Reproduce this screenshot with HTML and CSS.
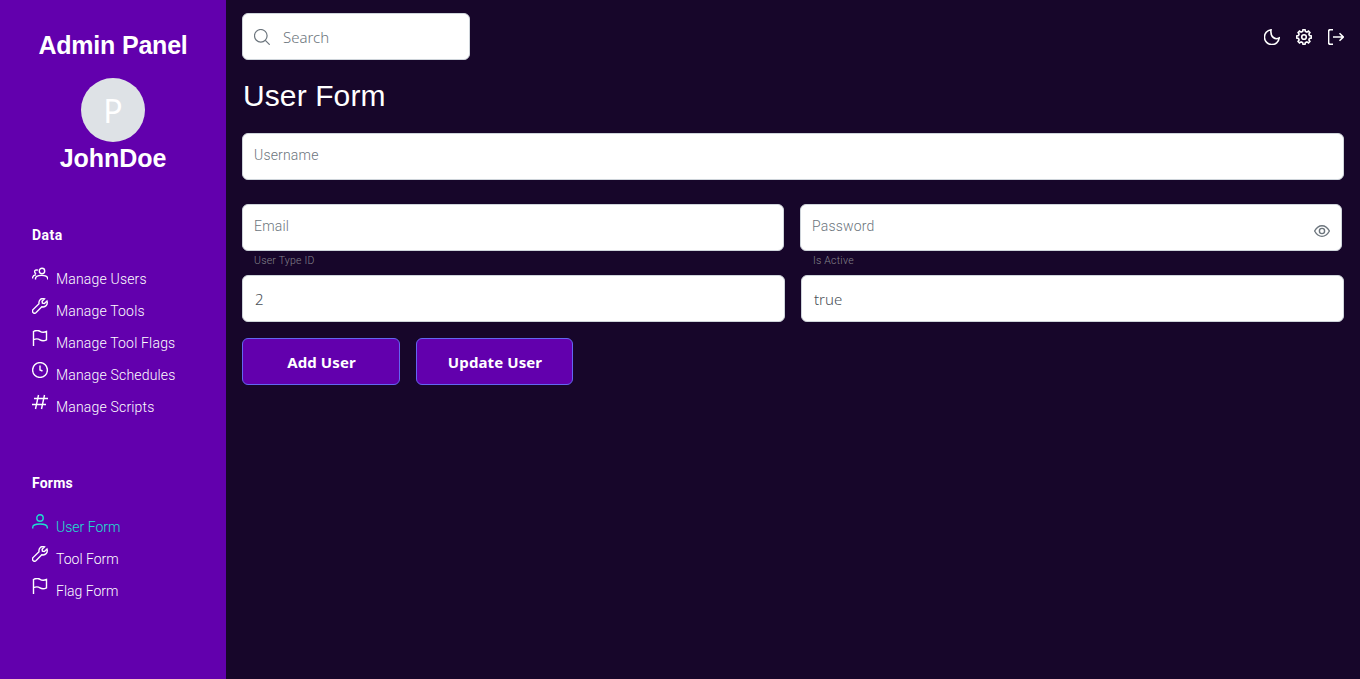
FILE: index.html
```html
<!DOCTYPE html>
<html lang="en">
<head>
<meta charset="utf-8">
<title>Admin Panel</title>
<link rel="stylesheet" href="styles.css">
</head>
<body>
<svg class="sprite" aria-hidden="true">
  <symbol id="users" viewBox="0 0 16 16"><circle cx="10" cy="5" r="2.700"/><path d="M3.500 13.500v-.7c0-2.400 2-3.400 6-3.400s6.200 1.400 6.200 3.400v.7M6 4.200c-2-.700-3.400.1-3.400 1.500 0 1 .6 1.700 1.600 2M.5 12.500c0-2 1-3.300 3.500-3.700"/></symbol>
  <symbol id="wrench" viewBox="0 0 16 16"><path d="M15 3.100 12.400 5.400l-2-.300-.300-1.900L12.500.8C9.300-.2 6.400 2 7 5.800L1 11.600c-.8 1-.6 2.100 0 2.900.9.9 2 1 2.900.3l5.900-6c3.900.8 6.300-2.200 5.200-5.700Z"/></symbol>
  <symbol id="flag" viewBox="0 0 16 16"><path d="M1.500 16V1.500C4.500-.1 6 0 8 1.300s4 1.300 6.500.2v8.300c-2.500 1.300-4.500 1.300-6.500 0s-3.500-1.400-6.500-.2"/></symbol>
  <symbol id="clock" viewBox="0 0 16 16"><circle cx="8" cy="8" r="7.400"/><path d="M8 3.500V8l2.500 1"/></symbol>
  <symbol id="hash" viewBox="0 0 16 16"><path d="M6.500 1 3.500 15M12.500 1 9.500 15M2 4.500h14M0 10.500h14"/></symbol>
  <symbol id="user" viewBox="0 0 16 16"><circle cx="8" cy="4" r="3.200"/><path d="M.7 14.500v-1C.7 11.200 3.500 10 8 10s7.300 1.200 7.300 3.500v1"/></symbol>
  <symbol id="search" viewBox="0 0 16 16"><circle cx="6.800" cy="6.800" r="6.300"/><path d="m11.300 11.300 4.400 4.400"/></symbol>
  <symbol id="moon" viewBox="0 0 16 16"><path d="M7 .8A7.400 7.400 0 1 0 15.200 9C11.400 11 6 8.400 7 .8Z"/></symbol>
  <symbol id="cog" viewBox="0 0 16 16"><path d="M6.600 2.500 7 .7h2l.4 1.800 1.500.6 1.600-1 1.400 1.400-1 1.600.6 1.500 1.800.4v2l-1.800.4-.6 1.500 1 1.600-1.400 1.400-1.600-1-1.500.6-.4 1.800H7l-.4-1.800-1.500-.6-1.600 1-1.400-1.400 1-1.600-.6-1.500L.7 9V7l1.800-.4.6-1.500-1-1.600 1.400-1.400 1.600 1Z"/><circle cx="8" cy="8" r="2.300"/></symbol>
  <symbol id="exit" viewBox="0 0 16 16"><path d="M5 .6H2.500C1 .6.6 1.100.6 2.500v11c0 1.400.4 1.900 1.900 1.900H5M5 8h10.300M11.500 4.300 15.300 8l-3.800 3.700"/></symbol>
  <symbol id="eye" viewBox="0 0 16 16"><path d="M.6 8C4.500.9 11.500.9 15.400 8C11.500 15.100 4.500 15.100.6 8Z"/><circle cx="8" cy="8" r="2.600"/></symbol>
</svg>
<div class="app">
  <aside class="sidebar">
    <h2 class="brand">Admin Panel</h2>
    <div class="avatar">P</div>
    <h2 class="name">JohnDoe</h2>
    <nav class="group">
      <h3 class="group-title">Data</h3>
      <a class="link"><svg class="icon"><use href="#users"/></svg><span>Manage Users</span></a>
      <a class="link"><svg class="icon"><use href="#wrench"/></svg><span>Manage Tools</span></a>
      <a class="link"><svg class="icon"><use href="#flag"/></svg><span>Manage Tool Flags</span></a>
      <a class="link"><svg class="icon"><use href="#clock"/></svg><span>Manage Schedules</span></a>
      <a class="link"><svg class="icon"><use href="#hash"/></svg><span>Manage Scripts</span></a>
    </nav>
    <nav class="group forms">
      <h3 class="group-title">Forms</h3>
      <a class="link active"><svg class="icon"><use href="#user"/></svg><span>User Form</span></a>
      <a class="link"><svg class="icon"><use href="#wrench"/></svg><span>Tool Form</span></a>
      <a class="link"><svg class="icon"><use href="#flag"/></svg><span>Flag Form</span></a>
    </nav>
  </aside>
  <main class="main">
    <header class="topbar">
      <div class="box search"><svg class="icon"><use href="#search"/></svg><span>Search</span></div>
      <div class="actions">
        <svg class="icon"><use href="#moon"/></svg>
        <svg class="icon"><use href="#cog"/></svg>
        <svg class="icon"><use href="#exit"/></svg>
      </div>
    </header>
    <h1 class="title">User Form</h1>
    <div class="box field">Username</div>
    <div class="row credentials">
      <div class="box field">Email</div>
      <div class="box field"><span>Password</span><svg class="icon eye"><use href="#eye"/></svg></div>
    </div>
    <div class="row labels"><span>User Type ID</span><span>Is Active</span></div>
    <div class="row values">
      <div class="box value">2</div>
      <div class="box value">true</div>
    </div>
    <div class="buttons">
      <button class="button">Add User</button>
      <button class="button update">Update User</button>
    </div>
  </main>
</div>
</body>
</html>
```
FILE: styles.css
```css
* { box-sizing: border-box; }
body { margin: 0; background: #17062a; font-family: Roboto, sans-serif; }
.sprite { display: none; }
.app { display: flex; height: 679px; overflow: hidden; }
.icon { width: 16px; height: 16px; flex: none; fill: none; stroke: currentColor; stroke-width: 1.4; overflow: visible; }
.sidebar { width: 226px; flex: none; background: #6200ad; color: #fff; display: flex; flex-direction: column; align-items: center; padding-top: 30px; }
.brand, .name { margin: 0; font: bold 25px/30px "Liberation Sans", sans-serif; white-space: nowrap; }
.brand { letter-spacing: -.2px; }
.name { margin-top: 1px; letter-spacing: -.05px; }
.avatar { width: 64px; height: 64px; margin-top: 18px; border-radius: 50%; background: #dee2e6; font: 32px/66px "Noto Sans", sans-serif; text-align: center; }
.group { width: 100%; padding-left: 32px; margin-top: 52px; }
.forms { margin-top: 47px; }
.group-title { margin: 0 0 21px; font: bold 14px/20px Roboto, sans-serif; letter-spacing: .5px; }
.forms .group-title { letter-spacing: .2px; }
.link { display: flex; height: 32px; gap: 8px; font-weight: 300; font-size: 14px; line-height: 26px; letter-spacing: .18px; white-space: nowrap; }
.forms .link { letter-spacing: 0; }
.active { color: #1de0d0; }
.main { flex: 1; padding: 13px 16px 0; color: #fff; }
.topbar { display: flex; justify-content: space-between; align-items: center; height: 47px; }
.box { height: 47px; border: 1px solid #ced4da; border-radius: 6px; background: #fff; color: #6c757d; }
.search { width: 228px; padding: 0 11px; display: flex; align-items: center; gap: 13px; font: 300 15px/20px "Noto Sans", sans-serif; }
.search .icon { stroke-width: 1.2; }
.actions { display: flex; gap: 16px; }
.actions .icon { stroke-width: 1.6; }
.title { margin: 18px 0 19px; font: normal 30px/36px "Liberation Sans", sans-serif; letter-spacing: .1px; padding-left: 1px; }
.field { display: flex; justify-content: space-between; padding: 11px 11px; font-weight: 300; font-size: 14px; line-height: 20px; letter-spacing: .18px; }
.row { display: grid; grid-template-columns: 1fr 1fr; gap: 16px; }
.credentials { margin-top: 24px; padding-right: 2px; }
.eye { margin-top: 7px; }
.labels { height: 24px; font-weight: 300; font-size: 10.5px; line-height: 19px; letter-spacing: .22px; color: #85858d; }
.labels span { padding-left: 12px; }
.values .box { padding: 0 12px; font: 300 15px/47px "Noto Sans", sans-serif; color: #495057; }
.buttons { display: flex; gap: 16px; margin-top: 16px; }
.button { width: 158px; height: 47px; padding: 1px 0 0 1px; border: 1px solid #6366f1; border-radius: 6px; background: #6200ad; color: #fff; font: bold 15px/20px "Noto Sans", sans-serif; letter-spacing: .1px; }
.update { width: 157px; }
```
